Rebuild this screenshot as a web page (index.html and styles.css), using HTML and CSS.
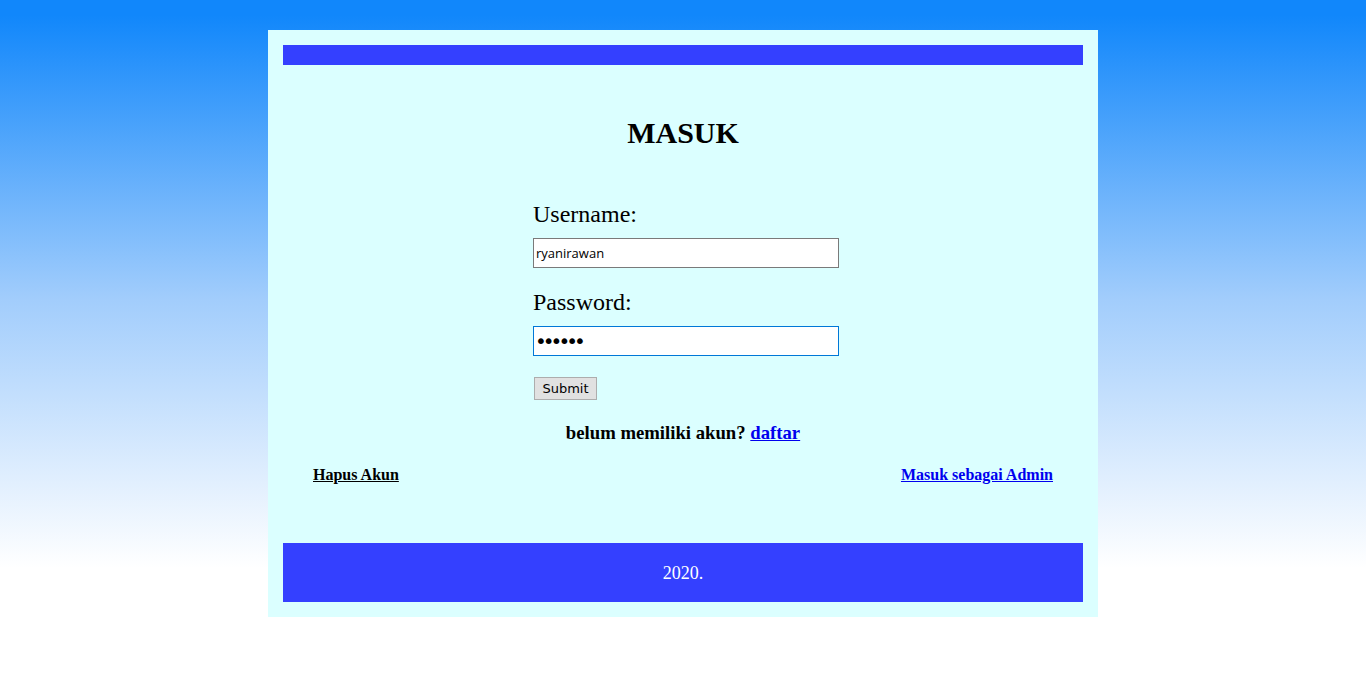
FILE: index.html
```html
<!DOCTYPE html>
<html>
<head>
<meta charset="utf-8">
<title>Masuk</title>
<link rel="stylesheet" href="styles.css">
</head>
<body>
<div class="container">
  <div class="header"></div>
  <div class="main">
    <h1 class="title">MASUK</h1>
    <form class="form">
      <label class="label" for="username">Username:</label>
      <input class="field" id="username" type="text" value="ryanirawan">
      <label class="label label-pass" for="password">Password:</label>
      <input class="field field-focus" id="password" type="password" value="123456">
      <button class="submit" type="button">Submit</button>
    </form>
    <h3 class="register">belum memiliki akun? <a href="#" class="link-blue">daftar</a></h3>
    <div class="links">
      <a href="#" class="link-black">Hapus Akun</a>
      <a href="#" class="link-blue">Masuk sebagai Admin</a>
    </div>
  </div>
  <div class="footer">2020.</div>
</div>
</body>
</html>
```
FILE: styles.css
```css
html {
  background: #fff;
  min-height: 100%;
}
body {
  margin: 0;
  padding-top: 30px;
  height: 663px;
  background: linear-gradient(to bottom, #1187fb 0px, #1187fb 15px, #a2cdfc 300px, #ffffff 568px, #ffffff 100%);
  background-repeat: no-repeat;
  font-family: "Liberation Serif", "Times New Roman", serif;
  color: #000;
}
.container {
  width: 800px;
  margin: 0 auto;
  padding: 15px;
  background: #dbffff;
}
.header {
  height: 20px;
  background: #3440ff;
}
.main {
  display: flex;
  flex-direction: column;
  align-items: center;
  padding: 51px 30px 58px;
}
.title {
  margin: 0;
  font-size: 30px;
  line-height: 34px;
  font-weight: bold;
}
.form {
  width: 300px;
  margin-top: 50px;
  display: flex;
  flex-direction: column;
  align-items: flex-start;
}
.label {
  font-size: 24px;
  line-height: 28px;
}
.label-pass {
  margin-top: 20px;
}
.field {
  box-sizing: border-box;
  width: 306px;
  height: 30px;
  margin-top: 10px;
  padding: 0 2px;
  border: 1px solid #7a7a7a;
  background: #fff;
  font-family: "Open Sans", "Noto Sans", sans-serif;
  font-size: 13px;
  color: #000;
  outline: none;
}
.field-focus {
  border-color: #0078d7;
  padding-left: 1px;
  font-family: "DejaVu Sans", sans-serif;
  font-size: 20px;
  letter-spacing: -4px;
}
.submit {
  margin-top: 21px;
  margin-left: 1px;
  width: 63px;
  height: 23px;
  padding: 0;
  border: 1px solid #adadad;
  background: #e1e1e1;
  font-family: "DejaVu Sans", "Noto Sans", sans-serif;
  font-size: 13px;
  color: #000;
}
.register {
  margin: 22px 0 0;
  font-size: 18.72px;
  line-height: 22px;
  font-weight: bold;
}
.links {
  align-self: stretch;
  display: flex;
  justify-content: space-between;
  margin-top: 21px;
  font-size: 16px;
  line-height: 20px;
  font-weight: bold;
}
.link-blue {
  color: #0000ee;
  text-decoration: underline;
}
.link-black {
  color: #000;
  text-decoration: underline;
}
.footer {
  height: 58px;
  padding-top: 1px;
  background: #3440ff;
  color: #fff;
  font-size: 18px;
  line-height: 59px;
  text-align: center;
}
```
